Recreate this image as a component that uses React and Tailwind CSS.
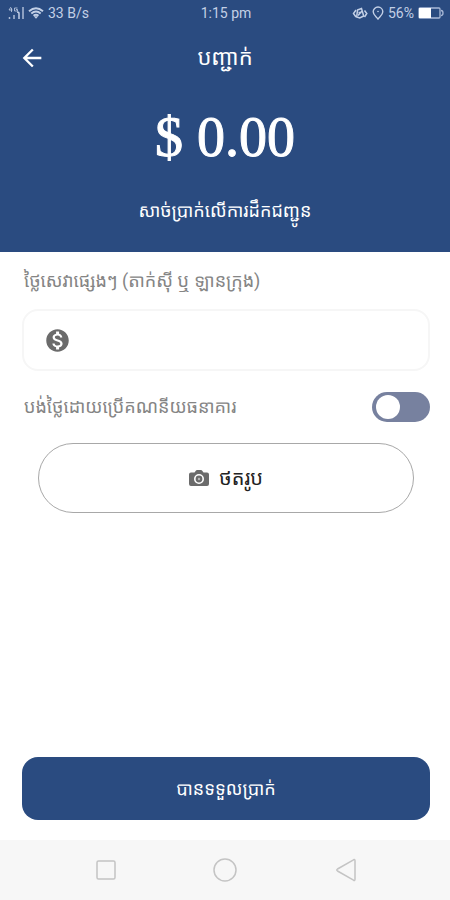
import React, { useState } from 'react';
import { MdArrowBack, MdMonetizationOn } from 'react-icons/md';

const SignalIcon = () => (
  <svg width="16" height="14" viewBox="0 0 16 14" fill="none" stroke="currentColor" strokeWidth="1.5">
    <path d="M1.500 11v2M6 9v4M15 1v12" opacity="0.850" />
    <path d="M11 13V7.500Q11 6 9 6" />
    <path d="M3 1 1 4h3.500M3.500 2V6M9.500 2H6.500v3h3V3.500H8" strokeWidth="1" opacity="0.800" />
  </svg>
);

const WifiIcon = () => (
  <svg width="16" height="12" viewBox="0 0 16 12" fill="none" stroke="currentColor" strokeWidth="1.9">
    <path d="M1 4.200Q8-1.800 15 4.200" />
    <path d="M3.300 6.500Q8 2.600 12.700 6.500" />
    <path d="M5.500 8.700Q8 6.700 10.500 8.700" />
    <path d="M5.800 9.300h4.400L8 11.800z" fill="currentColor" stroke="none" />
  </svg>
);

const VibrateIcon = () => (
  <svg width="16" height="13" viewBox="0 0 16 13" fill="none" stroke="currentColor" strokeWidth="1.5">
    <path d="M5.500 3 9.500 1.500l2.200 7.500-4 2-3-1z" />
    <path d="M4 3 1.500 6.500 4 10M12.500 3.500 14.800 6.500 12.500 10" />
    <path d="M6 8.500 10 4M6.500 5.500h3" />
  </svg>
);

const LocationIcon = () => (
  <svg width="12" height="14" viewBox="0 0 12 14" fill="none" stroke="currentColor" strokeWidth="1.4">
    <path d="M6 1a4.800 4.800 0 0 1 4.800 4.800C10.800 9 8 10.500 6 13 4 10.500 1.200 9 1.200 5.800A4.800 4.800 0 0 1 6 1z" />
    <circle cx="6" cy="5.500" r="0.800" fill="currentColor" stroke="none" />
  </svg>
);

const BatteryIcon = () => (
  <svg width="26" height="12" viewBox="0 0 26 12" fill="none">
    <rect x="1" y="1" width="21" height="10" rx="1" stroke="#a9b9d6" strokeWidth="1.3" />
    <rect x="1" y="1" width="12" height="10" fill="#fff" />
    <path d="M23 3.500q2 0 2 2.500t-2 2.500" stroke="#a9b9d6" strokeWidth="1.3" />
  </svg>
);

const CameraIcon = () => (
  <svg width="20" height="16" viewBox="0 0 20 16" fill="#6b6b6b">
    <path d="M2 2.500h3.500L7 .5q.3-.5 1-.5h4q.7 0 1 .5l1.500 2H18q2 0 2 2V14q0 2-2 2H2q-2 0-2-2V4.500q0-2 2-2z" />
    <circle cx="10" cy="9" r="4.200" stroke="#fff" strokeWidth="1.600" />
    <circle cx="10" cy="9" r="1.200" fill="#b5b5b5" />
  </svg>
);

const StatusBar = () => (
  <div className="grid grid-cols-3 items-center h-[26px] pl-2 pr-1.5 font-['Roboto',sans-serif] text-sm text-[#c3d0e6]">
    <div className="flex items-center gap-1">
      <SignalIcon />
      <WifiIcon />
      <span>33 B/s</span>
    </div>
    <span className="text-center">1:15 pm</span>
    <div className="flex items-center justify-end gap-1">
      <VibrateIcon />
      <LocationIcon />
      <span>56%</span>
      <BatteryIcon />
    </div>
  </div>
);

const Header = () => (
  <header className="bg-[#2a4b80] text-white h-[252px]">
    <StatusBar />
    <div className="grid grid-cols-[48px_1fr_48px] items-center h-16 px-2">
      <button type="button" aria-label="Back" className="flex items-center justify-center h-12">
        <MdArrowBack size={28} />
      </button>
      <h1 className="text-center text-[22px] leading-8">បញ្ជាក់</h1>
    </div>
    <p className="text-center font-['Liberation_Serif',serif] text-[56px] leading-[94px] [-webkit-text-stroke:1px_white]">
      $ 0.00
    </p>
    <p className="text-center text-lg leading-[54px]">សាច់ប្រាក់លើការដឹកជញ្ជូន</p>
  </header>
);

const NavBar = () => (
  <nav className="flex items-center justify-around h-[60px] px-[46px] bg-[#f7f7f7] text-[#c4c4c4]">
    <button type="button" aria-label="Recent apps">
      <svg width="24" height="24" viewBox="0 0 24 24" fill="none" stroke="currentColor" strokeWidth="1.5">
        <rect x="3" y="3" width="18" height="18" rx="1.500" />
      </svg>
    </button>
    <button type="button" aria-label="Home">
      <svg width="24" height="24" viewBox="0 0 24 24" fill="none" stroke="currentColor" strokeWidth="1.5">
        <circle cx="12" cy="12" r="11" />
      </svg>
    </button>
    <button type="button" aria-label="Back">
      <svg width="24" height="24" viewBox="0 0 24 24" fill="none" stroke="currentColor" strokeWidth="1.5">
        <path d="M21.500 1.800q1.500-.7 1.500 1v18.400q0 1.700-1.500 1L5.500 13q-1.500-1 0-2z" />
      </svg>
    </button>
  </nav>
);

const App = () => {
  const [fee, setFee] = useState('');
  const [bankPay, setBankPay] = useState(false);

  return (
    <div className="min-h-screen flex flex-col bg-white font-['Roboto','Noto_Sans_Khmer','Khmer_OS',sans-serif]">
      <Header />

      <main className="flex-1 flex flex-col pl-[22px] pr-5 pt-[11px] pb-5">
        <label htmlFor="fee" className="px-0.5 text-lg leading-9 text-[#858585]">
          ថ្លៃសេវាផ្សេងៗ (តាក់ស៊ី ឬ ឡានក្រុង)
        </label>

        {/* Fee field */}
        <div className="flex items-center gap-4 h-[62px] mt-2.5 px-5 border-2 border-[#f6f6f6] rounded-2xl">
          <MdMonetizationOn size={27} className="text-[#6b6b6b]" />
          <input
            id="fee"
            name="fee"
            type="text"
            inputMode="decimal"
            value={fee}
            onChange={(e) => setFee(e.target.value)}
            className="flex-1 min-w-0 text-lg text-gray-800 focus:outline-none"
          />
        </div>

        {/* Bank account switch */}
        <div className="flex items-center justify-between h-[72px] pl-0.5">
          <label htmlFor="bank" className="text-lg leading-9 text-[#858585]">
            បង់ថ្លៃដោយប្រើគណនីយធនាគារ
          </label>
          <input
            id="bank"
            type="checkbox"
            role="switch"
            checked={bankPay}
            onChange={(e) => setBankPay(e.target.checked)}
            className="appearance-none flex items-center w-[58px] h-[30px] px-1 rounded-full bg-[#77819f] checked:bg-[#2a4b80] checked:justify-end before:size-6 before:rounded-full before:bg-white"
          />
        </div>

        <button
          type="button"
          className="flex items-center justify-center gap-2.5 h-[70px] mx-4 border border-[#a8a8a8] rounded-full text-xl text-[#222222]"
        >
          <CameraIcon />
          <span>ថតរូប</span>
        </button>

        <button type="button" className="h-[63px] mt-auto rounded-2xl bg-[#2a4b80] text-lg text-white">
          បានទទួលប្រាក់
        </button>
      </main>

      <NavBar />
    </div>
  );
};

export default App;
